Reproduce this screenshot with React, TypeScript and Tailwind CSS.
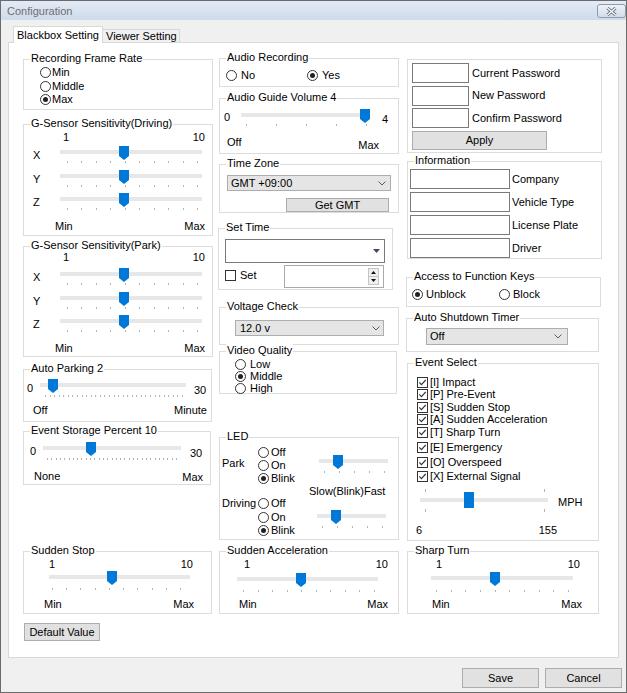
import type { ReactNode } from "react";

const spread = (a: number, b: number, n: number) =>
  Array.from({ length: n }, (_, i) => Math.round(a + ((b - a) * i) / (n - 1)));

function Group({ title, className = "", children }: { title?: string; className?: string; children?: ReactNode }) {
  return (
    <div className={`relative shrink-0 border border-[#dcdcdc] ${className}`}>
      {title && (
        <span className="absolute -top-[8px] left-[6px] whitespace-nowrap bg-white px-[1px] leading-[13px]">{title}</span>
      )}
      {children}
    </div>
  );
}

function Radio({ label, checked = false, gap = "ml-[2px]", className = "" }: { label: string; checked?: boolean; gap?: string; className?: string }) {
  return (
    <div className={`flex items-center ${className}`}>
      <span className="flex h-[11px] w-[11px] shrink-0 items-center justify-center rounded-full border border-[#333] bg-white">
        {checked && <span className="h-[5px] w-[5px] rounded-full bg-[#222]" />}
      </span>
      <span className={`whitespace-nowrap leading-[13px] ${gap}`}>{label}</span>
    </div>
  );
}

function CheckBox({ checked = true }: { checked?: boolean }) {
  return (
    <svg width="11" height="11" viewBox="0 0 11 11" className="block shrink-0">
      <rect x="0.5" y="0.5" width="10" height="10" fill="#fff" stroke="#333" />
      {checked && <path d="M2.3 5.4 L4.4 7.6 L8.7 3" fill="none" stroke="#333" strokeWidth="1.1" />}
    </svg>
  );
}

type SliderProps = { w: number; h?: number; t0: number; t1: number; thumb: number; ticks: number[]; tickY?: number; ty?: number };

function Slider({ w, h = 20, t0, t1, thumb, ticks, tickY = 16, ty = 6 }: SliderProps) {
  return (
    <svg width={w} height={h} className="block shrink-0">
      <rect x={t0} y={ty - 2} width={t1 - t0} height={4} fill="#e7e7e7" />
      {ticks.map((x, i) => (
        <rect key={i} x={x} y={tickY} width={1} height={2} fill="#b4b4b4" />
      ))}
      <polygon
        points={`${thumb - 5},${ty - 6} ${thumb + 5},${ty - 6} ${thumb + 5},${ty + 4} ${thumb},${ty + 8} ${thumb - 5},${ty + 4}`}
        fill="#0078d7"
      />
    </svg>
  );
}

function Select({ value, className = "" }: { value: string; className?: string }) {
  return (
    <div className={`flex items-center justify-between border border-[#adadad] bg-[#e5e5e5] leading-[13px] ${className}`}>
      <span>{value}</span>
      <svg width="8" height="5" className="block">
        <path d="M0.5 0.5 L4 4 L7.5 0.5" fill="none" stroke="#5a5a5a" />
      </svg>
    </div>
  );
}

function Btn({ children, className = "" }: { children: ReactNode; className?: string }) {
  return (
    <div className={`flex shrink-0 items-center justify-center border border-[#adadad] bg-[#e1e1e1] leading-[13px] ${className}`}>
      {children}
    </div>
  );
}

function Field({ className = "" }: { className?: string }) {
  return <div className={`shrink-0 border border-[#7a7a7a] bg-white ${className}`} />;
}

function GSensor({ title, h, numMt, rowsMt }: { title: string; h: string; numMt: string; rowsMt: string }) {
  return (
    <Group title={title} className={`w-[190px] ${h}`}>
      <div className={`flex h-[13px] justify-between pl-[39px] pr-[7px] leading-[13px] ${numMt}`}>
        <span>1</span>
        <span>10</span>
      </div>
      <div className={rowsMt}>
        {["X", "Y", "Z"].map((axis) => (
          <div key={axis} className="flex h-[23.5px]">
            <span className="w-[32px] shrink-0 pl-[9px] pt-[3px] leading-[13px]">{axis}</span>
            <Slider w={150} t0={4} t1={146} thumb={68} ticks={spread(11, 141, 10)} tickY={15} />
          </div>
        ))}
      </div>
      <div className="mt-[3px] flex h-[13px] justify-between pl-[31px] pr-[7px] leading-[13px]">
        <span>Min</span>
        <span>Max</span>
      </div>
    </Group>
  );
}

const events: [string, string][] = [
  ["[I] Impact", "mt-[12px]"],
  ["[P] Pre-Event", "mt-[0.5px]"],
  ["[S] Sudden Stop", "mt-[0.5px]"],
  ["[A] Sudden Acceleration", "mt-[0.5px]"],
  ["[T] Sharp Turn", "mt-[0.5px]"],
  ["[E] Emergency", "mt-[3px]"],
  ["[O] Overspeed", "mt-[3.5px]"],
  ["[X] External Signal", "mt-[1.5px]"],
];

export default function App() {
  return (
    <div className="flex h-[693px] w-[627px] flex-col border border-[#6b6b6b] bg-[#f0f0f0] font-['Liberation_Sans',Arial,sans-serif] text-[11px] text-black">
      {/* title bar */}
      <div className="flex h-[19px] shrink-0 items-start justify-between bg-gradient-to-b from-[#e3ebf6] to-[#cedbeb]">
        <span className="ml-[6px] mt-[4px] leading-[13px] text-[#6f6f6f]">Configuration</span>
        <div className="mt-[3px] flex h-[14px] w-[29px] items-center justify-center rounded-[3px] border border-[#8d9cb0] bg-gradient-to-b from-[#eef2f7] to-[#d3dce7]">
          <svg width="11" height="9" viewBox="0 0 11 9" className="block">
            <path d="M1.5 1 L9.5 8 M9.5 1 L1.5 8" stroke="#66717f" strokeWidth="3" />
            <path d="M1.5 1 L9.5 8 M9.5 1 L1.5 8" stroke="#fff" strokeWidth="1.2" />
          </svg>
        </div>
      </div>

      {/* tabs */}
      <div className="mt-[6px] flex h-[16px] shrink-0 items-start pl-[12px]">
        <div className="relative z-10 flex h-[17px] w-[90px] items-center border border-b-0 border-[#d9d9d9] bg-white pl-[3px] leading-[13px]">
          Blackbox Setting
        </div>
        <div className="-ml-[1px] mt-[3px] flex h-[13px] w-[78px] items-center border border-b-0 border-[#d9d9d9] bg-[#f0f0f0] pl-[3px] leading-[13px]">
          Viewer Setting
        </div>
      </div>

      {/* panel */}
      <div className="ml-[7px] h-[616px] w-[611px] shrink-0 border border-[#d9d9d9] bg-white pl-[14px]">
        <div className="flex h-[508px] items-start pt-[15px]">
          {/* column 1 */}
          <div className="mt-[1px] flex w-[196px] shrink-0 flex-col">
            <Group title="Recording Frame Rate" className="h-[51px] w-[190px]">
              <div className="mt-[6px] flex flex-col pl-[16px]">
                <Radio label="Min" gap="ml-[1px]" className="h-[13.5px]" />
                <Radio label="Middle" gap="ml-[1px]" className="h-[13.5px]" />
                <Radio label="Max" gap="ml-[1px]" checked className="h-[13.5px]" />
              </div>
            </Group>

            <div className="mt-[14px]">
              <GSensor title="G-Sensor Sensitivity(Driving)" h="h-[112px]" numMt="mt-[6px]" rowsMt="mt-[2px]" />
            </div>
            <div className="mt-[10px]">
              <GSensor title="G-Sensor Sensitivity(Park)" h="h-[111px]" numMt="mt-[3.5px]" rowsMt="mt-[4.5px]" />
            </div>

            <Group title="Auto Parking 2" className="mt-[12px] h-[53px] w-[189px]">
              <div className="mt-[9px] flex items-start">
                <span className="w-[12px] shrink-0 pl-[3px] pt-[2.5px] leading-[13px]">0</span>
                <Slider w={154} h={18} t0={4} t1={150} thumb={17} ticks={spread(9, 146, 31)} tickY={16} />
                <span className="ml-[4px] pt-[4.5px] leading-[13px]">30</span>
              </div>
              <div className="mt-[6.5px] flex h-[13px] justify-between pl-[9px] pr-[4px] leading-[13px]">
                <span>Off</span>
                <span>Minute</span>
              </div>
            </Group>

            <Group title="Event Storage Percent 10" className="mt-[9px] h-[54px] w-[188px]">
              <div className="mt-[10px] flex items-start">
                <span className="w-[15px] shrink-0 pl-[6px] pt-[2.5px] leading-[13px]">0</span>
                <Slider w={146} h={18} t0={4} t1={142} thumb={52} ticks={spread(8, 137, 31)} tickY={16} />
                <span className="ml-[5px] pt-[4.5px] leading-[13px]">30</span>
              </div>
              <div className="mt-[9.5px] flex h-[13px] items-start justify-between pl-[10px] pr-[7px] leading-[13px]">
                <span>None</span>
                <span className="pt-[1px]">Max</span>
              </div>
            </Group>
          </div>

          {/* column 2 */}
          <div className="flex w-[188px] shrink-0 flex-col">
            <Group title="Audio Recording" className="h-[29px] w-[180px]">
              <div className="mt-[9.5px] flex h-[13px] pl-[6px]">
                <Radio label="No" gap="ml-[4px]" className="w-[81px]" />
                <Radio label="Yes" gap="ml-[4px]" checked />
              </div>
            </Group>

            <Group title="Audio Guide Volume 4" className="mt-[11px] h-[56px] w-[180px]">
              <div className="mt-[10px] flex items-start">
                <span className="w-[16px] shrink-0 pl-[4px] pt-[2px] leading-[13px]">0</span>
                <Slider w={138} h={18} t0={5} t1={134} thumb={129} ticks={[10, 40, 70, 100, 130]} tickY={15} />
                <span className="ml-[8px] pt-[4px] leading-[13px]">4</span>
              </div>
              <div className="mt-[8.5px] flex items-start justify-between pl-[7px] pr-[19px] leading-[13px]">
                <span>Off</span>
                <span className="pt-[3px]">Max</span>
              </div>
            </Group>

            <Group title="Time Zone" className="mt-[10px] h-[49px] w-[180px]">
              <Select value="GMT +09:00" className="ml-[7px] mt-[10px] h-[16px] w-[164px] pl-[3px] pr-[4px]" />
              <Btn className="ml-[66px] mt-[7px] h-[14px] w-[103px]">Get GMT</Btn>
            </Group>

            <Group title="Set Time" className="-ml-[1px] mt-[15px] h-[62px] w-[175px]">
              <div className="ml-[6px] mt-[10px] flex h-[24px] w-[160px] items-center justify-end border border-[#7a7a7a] bg-white pr-[4px]">
                <svg width="7" height="4" className="block">
                  <path d="M0 0 L7 0 L3.5 4Z" fill="#3b4a68" />
                </svg>
              </div>
              <div className="mt-[2px] flex items-start">
                <div className="flex w-[65px] shrink-0 items-center pl-[6px] pt-[4px]">
                  <CheckBox checked={false} />
                  <span className="ml-[4px] leading-[13px]">Set</span>
                </div>
                <div className="flex h-[23px] w-[100px] items-start justify-end border border-[#a9a9a9] bg-white pr-[4px] pt-[2px]">
                  <div className="flex flex-col">
                    <div className="flex h-[9px] w-[11px] items-center justify-center border border-[#c5c5c5] bg-[#f0f0f0]">
                      <svg width="5" height="3" className="block">
                        <path d="M0 3 L2.5 0 L5 3Z" fill="#111" />
                      </svg>
                    </div>
                    <div className="flex h-[8px] w-[11px] items-center justify-center border border-t-0 border-[#c5c5c5] bg-[#f0f0f0]">
                      <svg width="5" height="3" className="block">
                        <path d="M0 0 L5 0 L2.5 3Z" fill="#111" />
                      </svg>
                    </div>
                  </div>
                </div>
              </div>
            </Group>

            <Group title="Voltage Check" className="mt-[17px] h-[38px] w-[180px]">
              <Select value="12.0 v" className="ml-[15px] mt-[12px] h-[16px] w-[149px] pl-[4px] pr-[3px]" />
            </Group>

            <Group title="Video Quality" className="mt-[6px] h-[43px] w-[178px]">
              <div className="mt-[6px] flex flex-col pl-[15px]">
                <Radio label="Low" gap="ml-[4px]" className="h-[12px]" />
                <Radio label="Middle" gap="ml-[4px]" checked className="h-[12px]" />
                <Radio label="High" gap="ml-[4px]" className="h-[12px]" />
              </div>
            </Group>

            <Group title="LED" className="mt-[43px] h-[103px] w-[180px]">
              <div className="mt-[8px] flex items-start">
                <span className="w-[38px] shrink-0 pl-[2px] pt-[10.5px] leading-[13px]">Park</span>
                <div className="flex w-[56px] shrink-0 flex-col">
                  <Radio label="Off" className="h-[13px]" />
                  <Radio label="On" className="h-[13px]" />
                  <Radio label="Blink" checked className="h-[13px]" />
                </div>
                <div className="mt-[9px]">
                  <Slider w={80} h={18} t0={5} t1={74} thumb={24} ticks={[10, 25, 40, 55, 70]} tickY={16} />
                </div>
              </div>
              <div className="h-[12px] pl-[89px] leading-[12px]">Slow(Blink)Fast</div>
              <div className="flex items-start">
                <span className="h-[13.5px] w-[38px] shrink-0 pl-[2px] leading-[13.5px]">Driving</span>
                <div className="flex w-[54px] shrink-0 flex-col">
                  <Radio label="Off" className="h-[13.5px]" />
                  <Radio label="On" className="h-[13.5px]" />
                  <Radio label="Blink" checked className="h-[13.5px]" />
                </div>
                <div className="mt-[13px]">
                  <Slider w={80} h={18} t0={5} t1={74} thumb={24} ticks={[10, 25, 40, 55, 70]} tickY={16} />
                </div>
              </div>
            </Group>
          </div>

          {/* column 3 */}
          <div className="mt-[1px] flex flex-col">
            <Group className="h-[94px] w-[195px]">
              {["Current Password", "New Password", "Confirm Password"].map((label, i) => (
                <div key={label} className={`flex items-center ${i === 0 ? "mt-[3px]" : "mt-[2.5px]"}`}>
                  <Field className="ml-[4px] h-[20px] w-[57px]" />
                  <span className="ml-[3px] leading-[13px]">{label}</span>
                </div>
              ))}
              <Btn className="ml-[4px] mt-[3px] h-[19px] w-[135px]">Apply</Btn>
            </Group>

            <Group title="Information" className="mt-[8px] h-[98px] w-[195px]">
              {["Company", "Vehicle Type", "License Plate", "Driver"].map((label, i) => (
                <div key={label} className={`flex items-center ${i === 0 ? "mt-[7px]" : "mt-[3px]"}`}>
                  <Field className="ml-[2px] h-[20px] w-[100px]" />
                  <span className="ml-[2px] leading-[13px]">{label}</span>
                </div>
              ))}
            </Group>

            <Group title="Access to Function Keys" className="-ml-[1px] mt-[18px] h-[30px] w-[195px]">
              <div className="mt-[9.5px] flex h-[13px] pl-[5px]">
                <Radio label="Unblock" gap="ml-[3px]" checked className="w-[87px]" />
                <Radio label="Block" gap="ml-[3px]" />
              </div>
            </Group>

            <Group title="Auto Shutdown Timer" className="-ml-[1px] mt-[11px] h-[34px] w-[193px]">
              <Select value="Off" className="ml-[19px] mt-[9px] h-[17px] w-[142px] pl-[3px] pr-[5px]" />
            </Group>

            <Group title="Event Select" className="mt-[11px] h-[178px] w-[192px]">
              {events.map(([label, mt]) => (
                <div key={label} className={`flex h-[12px] items-center pl-[9px] ${mt}`}>
                  <CheckBox />
                  <span className="ml-[2px] whitespace-nowrap leading-[13px]">{label}</span>
                </div>
              ))}
              <div className="mt-[4px] flex items-start pl-[8px]">
                <svg width="136" height="28" className="block shrink-0">
                  <rect x="4" y="12" width="128" height="4" fill="#e7e7e7" />
                  <rect x="9" y="3" width="1" height="3" fill="#b4b4b4" />
                  <rect x="128" y="3" width="1" height="3" fill="#b4b4b4" />
                  <rect x="9" y="23" width="1" height="3" fill="#b4b4b4" />
                  <rect x="128" y="23" width="1" height="3" fill="#b4b4b4" />
                  <rect x="48" y="6" width="10" height="16" fill="#0078d7" />
                </svg>
                <span className="ml-[6px] pt-[9.5px] leading-[13px]">MPH</span>
              </div>
              <div className="ml-[8px] mt-[9.5px] flex h-[13px] w-[141px] justify-between leading-[13px]">
                <span>6</span>
                <span>155</span>
              </div>
            </Group>
          </div>
        </div>

        {/* bottom row */}
        <div className="flex items-start">
          <Group title="Sudden Stop" className="h-[63px] w-[189px]">
            <div className="mt-[5.5px] flex h-[13px] justify-between pl-[25px] pr-[18px] leading-[13px]">
              <span>1</span>
              <span>10</span>
            </div>
            <div className="ml-[21px]">
              <Slider w={150} t0={4} t1={145} thumb={67} ticks={spread(7, 135, 10)} tickY={17} />
            </div>
            <div className="mt-[7px] flex h-[13px] justify-between pl-[20px] pr-[17px] leading-[13px]">
              <span>Min</span>
              <span>Max</span>
            </div>
          </Group>

          <Group title="Sudden Acceleration" className="ml-[7px] h-[63px] w-[180px]">
            <div className="mt-[5.5px] flex h-[13px] justify-between pl-[24px] pr-[10px] leading-[13px]">
              <span>1</span>
              <span>10</span>
            </div>
            <div className="ml-[13px] mt-[2px]">
              <Slider w={150} t0={4} t1={145} thumb={68} ticks={spread(10, 141, 10)} tickY={17} />
            </div>
            <div className="mt-[5.5px] flex h-[13px] justify-between pl-[19px] pr-[10px] leading-[13px]">
              <span>Min</span>
              <span>Max</span>
            </div>
          </Group>

          <Group title="Sharp Turn" className="ml-[8px] h-[63px] w-[192px]">
            <div className="mt-[6px] flex h-[13px] justify-between pl-[28px] pr-[18px] leading-[13px]">
              <span>1</span>
              <span>10</span>
            </div>
            <div className="ml-[19px] mt-[1px]">
              <Slider w={150} t0={4} t1={146} thumb={68} ticks={spread(9, 141, 10)} tickY={18} />
            </div>
            <div className="mt-[5.5px] flex h-[13px] justify-between pl-[24px] pr-[16px] leading-[13px]">
              <span>Min</span>
              <span>Max</span>
            </div>
          </Group>
        </div>

        <Btn className="ml-[1px] mt-[9px] h-[18px] w-[76px]">Default Value</Btn>
      </div>

      {/* dialog buttons */}
      <div className="mt-[10px] flex justify-end gap-[6px] pr-[4px]">
        <Btn className="h-[20px] w-[77px]">Save</Btn>
        <Btn className="h-[20px] w-[77px]">Cancel</Btn>
      </div>
    </div>
  );
}
